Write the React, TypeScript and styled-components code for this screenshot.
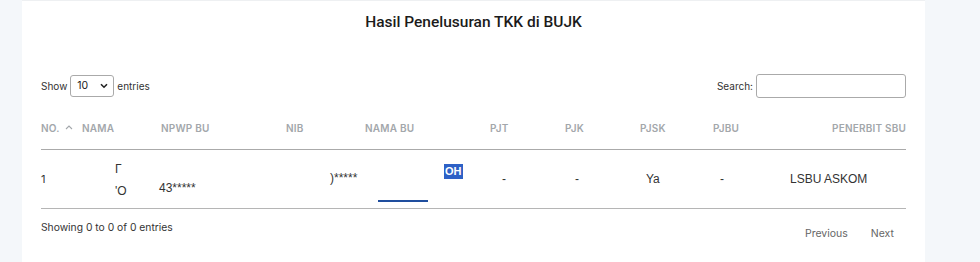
import React from "react";
import styled, { createGlobalStyle } from "styled-components";

const Global = createGlobalStyle`
  html, body { margin: 0; padding: 0; background: #f4f7fa; }
  body { font-family: Inter, "Noto Sans", sans-serif; color: #333; }
  * { box-sizing: border-box; }
`;

const Page = styled.div`
  display: flex;
  min-height: 262px;
  padding-left: 22px;
`;

const Card = styled.section`
  width: 903px;
  min-height: 262px;
  background: #ffffff;
  border-top: 1px solid #eef0f2;
  padding: 0 19px;
  display: flex;
  flex-direction: column;
`;

const Title = styled.h1`
  margin: 12px 0 0;
  font-family: Roboto, "Liberation Sans", sans-serif;
  font-weight: 500;
  font-size: 15.5px;
  line-height: 18px;
  text-align: center;
  color: #1b1b1b;
`;

const Controls = styled.div`
  margin-top: 43px;
  display: flex;
  justify-content: space-between;
  align-items: center;
  height: 23px;
`;

const Label = styled.label`
  display: flex;
  align-items: center;
  gap: 3px;
  font-size: 10px;
  color: #333;
`;

const SelectBox = styled.div`
  position: relative;
  width: 44px;
  height: 22px;
  border: 1px solid #aaa;
  border-radius: 3px;
  display: flex;
  align-items: center;
  padding-left: 6px;
  font-size: 10.5px;
  color: #222;
`;

const Caret = styled.svg`
  position: absolute;
  right: 5px;
  top: 7px;
`;

const SearchInput = styled.input`
  width: 150px;
  height: 24px;
  border: 1px solid #aaa;
  border-radius: 3px;
  outline: none;
  font-size: 11px;
`;

const Grid = styled.div`
  display: grid;
  grid-template-columns: 41px 79px 125px 79px 125px 75px 75px 73px 77px 1fr;
`;

const HeadRow = styled(Grid)`
  margin-top: 20px;
  height: 33px;
  border-bottom: 1px solid #aaa;
`;

const Th = styled.div<{ $right?: boolean }>`
  display: flex;
  align-items: flex-start;
  justify-content: ${(p) => (p.$right ? "flex-end" : "flex-start")};
  gap: 5px;
  padding-top: 4px;
  font-size: 10px;
  line-height: 14px;
  font-weight: 600;
  letter-spacing: 0.2px;
  color: #a3a7ab;
`;

const BodyRow = styled(Grid)`
  height: 59px;
  border-bottom: 1px solid #b5b5b5;
`;

const Td = styled.div<{ $pad?: number; $top?: number }>`
  position: relative;
  display: flex;
  flex-direction: column;
  justify-content: ${(p) => (p.$top !== undefined ? "flex-start" : "center")};
  padding-left: ${(p) => p.$pad ?? 0}px;
  padding-top: ${(p) => p.$top ?? 0}px;
  font-family: "Liberation Sans", Arial, sans-serif;
  font-size: 12px;
  line-height: 22px;
  color: #333;
  white-space: nowrap;
`;

const Line = styled.span`
  display: block;
  height: 22px;
  line-height: 22px;
`;

const NumCell = styled(Td)`
  font-family: Inter, sans-serif;
  font-size: 11px;
`;

const Underline = styled.div`
  width: 50px;
  height: 2px;
  margin-top: 43px;
  margin-left: 13px;
  background: #1f4e9e;
`;

const Highlight = styled.span`
  display: inline-block;
  margin-top: 14px;
  margin-left: -46px;
  padding: 0 1px;
  height: 15px;
  line-height: 15px;
  background: #2d61c6;
  color: #fff;
  font-weight: 700;
  font-size: 11px;
  align-self: flex-start;
`;

const Footer = styled.div`
  display: flex;
  justify-content: space-between;
  align-items: flex-start;
  padding-top: 11px;
`;

const Info = styled.div`
  font-size: 10.3px;
  color: #333;
  line-height: 14px;
`;

const Pager = styled.div`
  display: flex;
  gap: 23px;
  margin-top: 7px;
  margin-right: 12px;
`;

const PageBtn = styled.span`
  font-size: 10.5px;
  line-height: 14px;
  color: #666;
`;

export default function App() {
  return (
    <>
      <Global />
      <Page>
        <Card>
          <Title>Hasil Penelusuran TKK di BUJK</Title>
          <Controls>
            <Label>
              Show
              <SelectBox>
                10
                <Caret width="8" height="6" viewBox="0 0 8 6">
                  <path d="M1 1.2 L4 4.2 L7 1.2" fill="none" stroke="#222" strokeWidth="1.6" />
                </Caret>
              </SelectBox>
              entries
            </Label>
            <Label>
              Search:
              <SearchInput />
            </Label>
          </Controls>
          <HeadRow>
            <Th>
              NO.
              <svg width="8" height="10" viewBox="0 0 8 10" style={{ marginTop: 2 }}>
                <path d="M1 6 L4 3 L7 6" fill="none" stroke="#a3a7ab" strokeWidth="1.1" />
              </svg>
            </Th>
            <Th>NAMA</Th>
            <Th>NPWP BU</Th>
            <Th>NIB</Th>
            <Th>NAMA BU</Th>
            <Th>PJT</Th>
            <Th>PJK</Th>
            <Th>PJSK</Th>
            <Th>PJBU</Th>
            <Th $right>PENERBIT SBU</Th>
          </HeadRow>
          <BodyRow>
            <NumCell>1</NumCell>
            <Td $pad={33} $top={8}>
              <Line>Γ</Line>
              <Line>'O</Line>
            </Td>
            <Td $pad={0} $top={27}>
              <span style={{ marginLeft: -2 }}>43*****</span>
            </Td>
            <Td $pad={44} $top={17}>
              <span>)*****</span>
            </Td>
            <Td>
              <Underline />
            </Td>
            <Td $top={0}>
              <Highlight>OH</Highlight>
              <span style={{ position: "absolute", left: 12, top: 18 }}>-</span>
            </Td>
            <Td $pad={10}>-</Td>
            <Td $pad={6}>Ya</Td>
            <Td $pad={7}>-</Td>
            <Td>LSBU ASKOM</Td>
          </BodyRow>
          <Footer>
            <Info>Showing 0 to 0 of 0 entries</Info>
            <Pager>
              <PageBtn>Previous</PageBtn>
              <PageBtn>Next</PageBtn>
            </Pager>
          </Footer>
        </Card>
      </Page>
    </>
  );
}
